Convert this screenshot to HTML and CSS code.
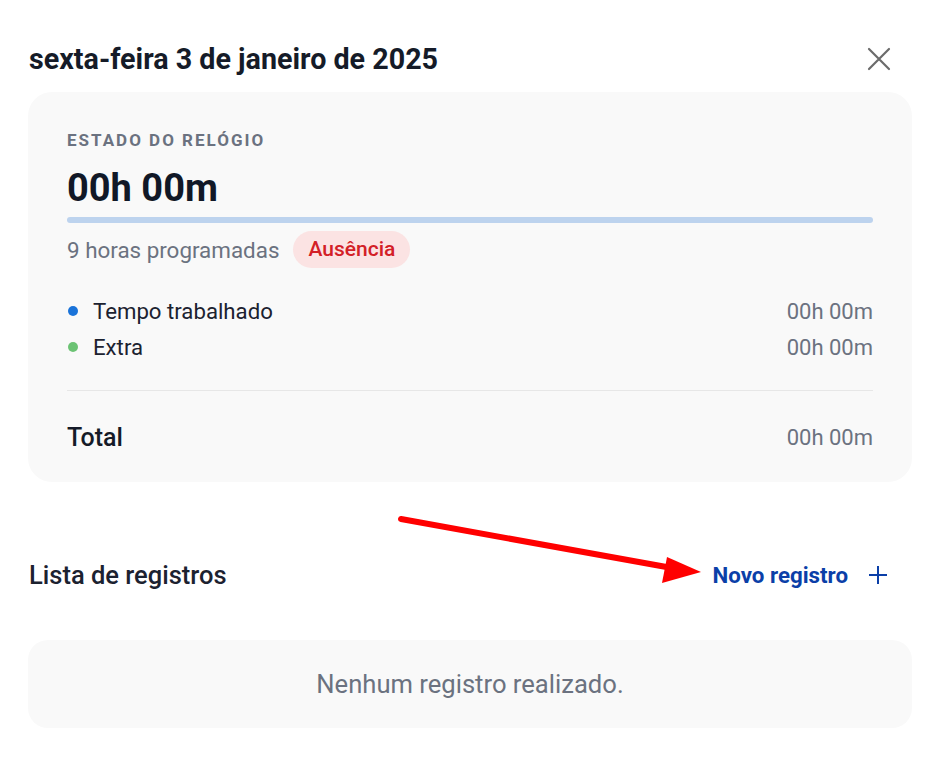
FILE: index.html
```html
<!DOCTYPE html>
<html lang="pt-br">
<head>
    <meta charset="UTF-8">
    <meta name="viewport" content="width=device-width, initial-scale=1.0">
    <title>Registro do dia</title>
    <link rel="stylesheet" href="styles.css">
</head>
<body>
    <div class="painel">
        <div class="cabecalho">
            <h1>sexta-feira 3 de janeiro de 2025</h1>
            <button class="fechar" aria-label="Fechar">
                <svg width="24" height="24" viewBox="0 0 24 24"><path d="M2 2L22 22M22 2L2 22" stroke="#6b6b6b" stroke-width="2.2" stroke-linecap="round"/></svg>
            </button>
        </div>

        <div class="cartao">
            <div class="rotulo">ESTADO DO RELÓGIO</div>
            <div class="tempo">00h 00m</div>
            <div class="barra"></div>
            <div class="programadas">
                <span>9 horas programadas</span>
                <span class="etiqueta">Ausência</span>
            </div>

            <div class="linhas">
                <div class="linha">
                    <span class="nome"><i class="ponto azul"></i>Tempo trabalhado</span>
                    <span class="valor">00h 00m</span>
                </div>
                <div class="linha">
                    <span class="nome"><i class="ponto verde"></i>Extra</span>
                    <span class="valor">00h 00m</span>
                </div>
            </div>

            <div class="total">
                <span>Total</span>
                <span class="valor">00h 00m</span>
            </div>
        </div>

        <div class="lista">
            <h2>Lista de registros</h2>
            <button class="novo">
                Novo registro
                <svg width="20" height="20" viewBox="0 0 20 20"><path d="M10 1V19M1 10H19" stroke="#0b3fa8" stroke-width="2"/></svg>
            </button>
        </div>

        <div class="vazio">Nenhum registro realizado.</div>
    </div>

    <svg class="seta" width="942" height="778" viewBox="0 0 942 778">
        <line x1="401" y1="519" x2="672" y2="568" stroke="#ff0000" stroke-width="6" stroke-linecap="round"/>
        <polygon points="667,557 701,572 662,583" fill="#ff0000"/>
    </svg>
</body>
</html>
```

FILE: styles.css
```css
body {
    font-family: Roboto, "Noto Sans", Arial, sans-serif;
    background-color: #fff;
    margin: 0;
    color: #111827;
}
.painel {
    padding: 34px 30px 0 28px;
}
.cabecalho {
    display: flex;
    justify-content: space-between;
    align-items: center;
    padding-left: 1px;
    margin-bottom: 8px;
}
h1 {
    margin: 0;
    font-size: 28.7px;
    font-weight: 700;
    line-height: 50px;
    color: #151b28;
}
.fechar {
    background: none;
    border: none;
    padding: 0;
    margin-right: 21px;
    width: 24px;
    height: 24px;
    cursor: pointer;
}
.cartao {
    background: #f9f9f9;
    border-radius: 24px;
    padding: 37px 39px 27px 39px;
}
.rotulo {
    font-size: 17px;
    font-weight: 700;
    letter-spacing: 2px;
    color: #6b7280;
    line-height: 22px;
}
.tempo {
    font-size: 38px;
    font-weight: 700;
    line-height: 50px;
    margin-top: 12px;
    color: #111827;
}
.barra {
    height: 6px;
    border-radius: 3px;
    background: #bdd3ee;
    margin-top: 4px;
}
.programadas {
    display: flex;
    align-items: center;
    gap: 14px;
    font-size: 22.4px;
    color: #6b7280;
    margin-top: 8px;
}
.etiqueta {
    background: #fbe3e3;
    color: #d32027;
    border-radius: 19px;
    padding: 8px 15px;
    line-height: 21px;
    font-size: 21px;
    font-weight: 500;
}
.linhas {
    margin-top: 25px;
    padding-bottom: 25px;
    border-bottom: 1px solid #e7e7e7;
}
.linha, .total {
    display: flex;
    justify-content: space-between;
    align-items: center;
    height: 36px;
}
.nome {
    display: flex;
    align-items: center;
    font-size: 22.2px;
    color: #1c2230;
}
.ponto {
    width: 10px;
    height: 10px;
    border-radius: 50%;
    margin: 0 15px 0 1px;
}
.azul {
    background: #1a73d9;
}
.verde {
    background: #6cc374;
}
.valor {
    font-size: 22px;
    font-weight: 400;
    color: #6b7280;
}
.total {
    margin-top: 28px;
    font-size: 25px;
    font-weight: 500;
    color: #151b28;
}
.lista {
    display: flex;
    justify-content: space-between;
    align-items: center;
    height: 30px;
    margin-top: 78px;
    padding-left: 1px;
}
h2 {
    margin: 0;
    font-size: 25.5px;
    font-weight: 500;
    color: #1c2230;
}
.novo {
    display: flex;
    align-items: center;
    gap: 20px;
    background: none;
    border: none;
    padding: 0;
    margin-right: 24px;
    font-family: inherit;
    font-size: 22.3px;
    font-weight: 700;
    color: #0b3fa8;
    cursor: pointer;
}
.vazio {
    margin-top: 50px;
    background: #f9f9f9;
    border-radius: 20px;
    height: 88px;
    display: flex;
    align-items: center;
    justify-content: center;
    font-size: 25.6px;
    color: #6b7280;
}
.seta {
    position: absolute;
    top: 0;
    left: 0;
    pointer-events: none;
}
```
